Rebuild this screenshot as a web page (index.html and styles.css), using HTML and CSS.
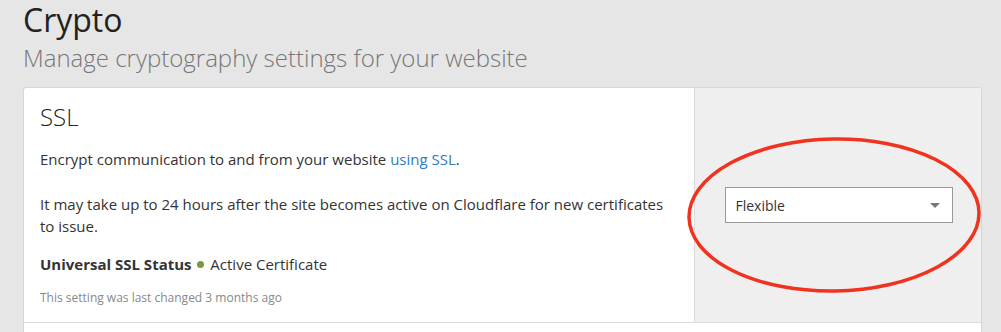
FILE: index.html
```html
<!DOCTYPE html>
<html>

<head>
  <meta charset="UTF-8">
  <meta name="viewport" content="width=device-width, initial-scale=1">
  <title>Crypto</title>
  <link rel="stylesheet" href="styles.css">
</head>

<body>

  <header class="page-header">
    <h1>Crypto</h1>
    <p class="subtitle">Manage cryptography settings for your website</p>
  </header>

  <section class="card">
    <div class="card-row">
      <div class="card-main">
        <h3>SSL</h3>
        <p class="intro">Encrypt communication to and from your website <a href="#">using SSL</a>.</p>
        <p>It may take up to 24 hours after the site becomes active on Cloudflare for new certificates to issue.</p>
        <p class="status"><strong>Universal SSL Status</strong> <span class="dot"></span> Active Certificate</p>
        <p class="changed">This setting was last changed 3 months ago</p>
      </div>

      <div class="card-side">
        <div class="select">
          <span>Flexible</span>
          <span class="caret"></span>
        </div>
        <!-- hand drawn highlight -->
        <svg class="circle" width="300" height="162" viewBox="0 0 300 162">
          <ellipse cx="150" cy="81" rx="145" ry="76" fill="none" stroke="#f0321e" stroke-width="3.5"
            transform="rotate(-1 150 81)" />
        </svg>
      </div>
    </div>
    <div class="card-row next"></div>
  </section>

</body>

</html>
```

FILE: styles.css
```css
body {
  margin: 0;
  background: #e6e6e6;
  color: #333;
  font-family: 'Open Sans', sans-serif;
  padding: 0 19px 0 23px;
}

.page-header h1 {
  font-size: 32px;
  font-weight: 400;
  color: #222;
  margin: 0;
  line-height: 36px;
  padding-top: 2px;
}

.subtitle {
  font-size: 24px;
  font-weight: 300;
  color: #777;
  margin: 4px 0 0;
  line-height: 32px;
}

.card {
  margin-top: 13px;
  border: 1px solid #d6d6d6;
  border-radius: 3px;
  background: #fff;
}

.card-row {
  display: flex;
  border-bottom: 1px solid #dadada;
}

.card-main {
  flex: 1;
  padding: 15px 26px 15px 16px;
  border-right: 1px solid #dadada;
}

.card-main h3 {
  font-size: 24px;
  font-weight: 300;
  margin: 0 0 17px;
  line-height: 28px;
  color: #222;
}

.card-main p {
  font-size: 15px;
  line-height: 22px;
  margin: 0;
}

.card-main p.intro {
  margin-bottom: 23px;
}

.card-main a {
  color: #2f7bbf;
  text-decoration: none;
}

.card-main p.status {
  margin-top: 16px;
}

.status strong {
  font-weight: 700;
}

.dot {
  display: inline-block;
  width: 7px;
  height: 7px;
  border-radius: 50%;
  background: #739c3a;
  vertical-align: 2px;
  margin: 0 2px;
}

.card-main p.changed {
  font-size: 12px;
  color: #888;
  margin-top: 14px;
  line-height: 18px;
}

.card-side {
  position: relative;
  width: 286px;
  background: #efefef;
  display: flex;
  align-items: center;
  justify-content: center;
}

.select {
  width: 228px;
  height: 36px;
  background: #fff;
  border: 1px solid #999;
  display: flex;
  align-items: center;
  justify-content: space-between;
  padding: 0 12px 0 10px;
  box-sizing: border-box;
  font-size: 14px;
  color: #333;
  margin-left: 1px;
}

.caret {
  width: 0;
  height: 0;
  border-left: 5px solid transparent;
  border-right: 5px solid transparent;
  border-top: 5px solid #777;
}

.circle {
  position: absolute;
  left: -11px;
  top: 46px;
}

.next {
  height: 20px;
  border-bottom: none;
}
```
